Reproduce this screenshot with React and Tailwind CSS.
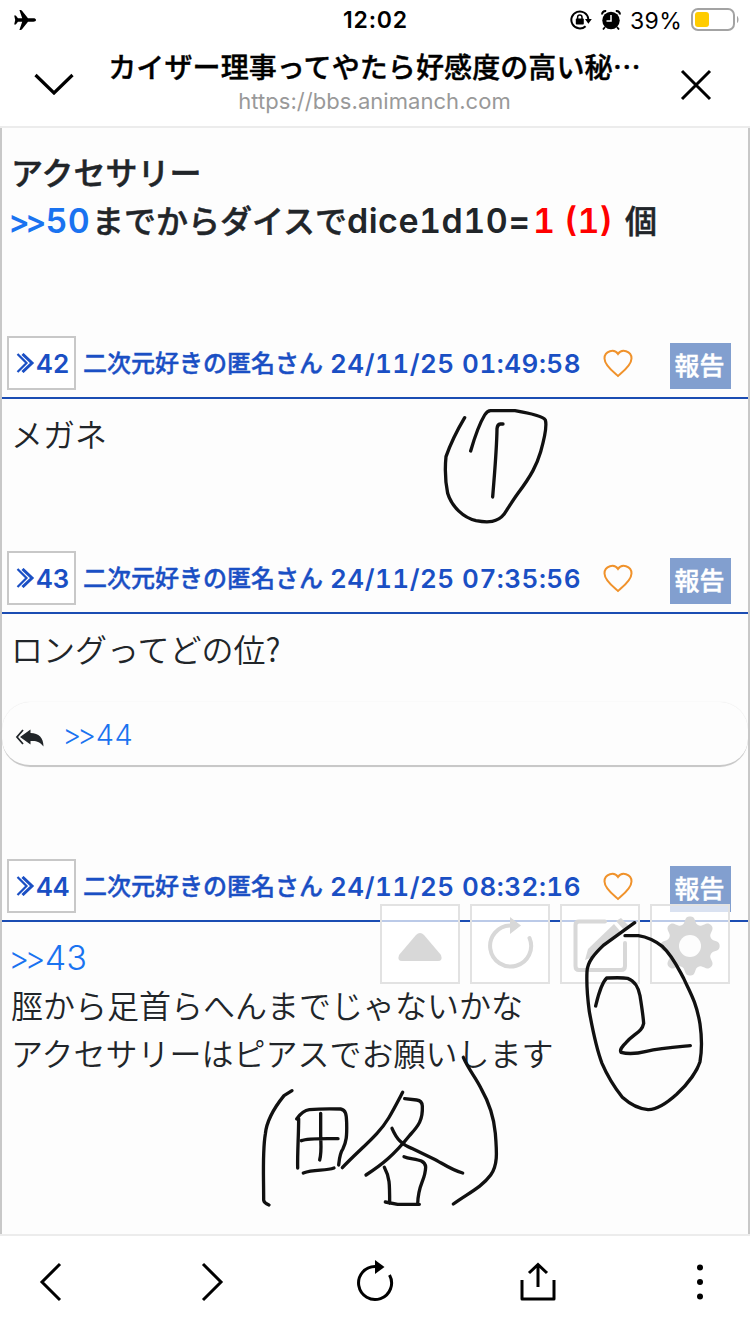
const jpFont = "font-['Noto_Sans_CJK_JP',sans-serif]";
const latinFont = "font-['Inter','Noto_Sans_CJK_JP',sans-serif]";

const StatusBar = () => (
  <div className="flex h-10 items-center justify-between pl-[14px] pr-[10px]">
    <div className="w-[167px]">
      <svg width="22" height="20" viewBox="0 0 22 20">
        <path d="M22 10c0-1.100-1.200-1.700-2.600-1.700h-5.400L8 .8C7.600.2 7.200 0 6.700 0H5.400l2.800 8.300H4L1.800 5.500H.2l1 4.500-1 4.500h1.600L4 11.700h4.200L5.400 20h1.300c.5 0 .9-.2 1.300-.8l6-7.500h5.400c1.400 0 2.600-.6 2.600-1.700z" />
      </svg>
    </div>
    <span className={`${latinFont} mt-px text-[23px] font-semibold tracking-[0.8px]`}>
      12:02
    </span>
    <div className="flex w-[170px] items-center">
      <svg width="22" height="20" viewBox="0 0 22 20" fill="none">
        <path
          d="M15.600 16.200A8.500 8.500 0 1 1 18.300 9"
          stroke="#000"
          strokeWidth="2"
        />
        <path d="M15 9h6.800l-3.400 4.800z" fill="#000" />
        <rect x="5.800" y="8.600" width="8" height="6" rx=".8" fill="#000" />
        <path d="M7.600 9V7.200a2.200 2.200 0 0 1 4.400 0V9" stroke="#000" strokeWidth="1.500" />
      </svg>
      <svg className="ml-[9px]" width="20" height="20" viewBox="0 0 20 20" fill="none">
        <circle cx="10" cy="10.500" r="8.700" fill="#000" />
        <path d="M1 4.500C1.200 2.300 3 .9 5.200 1M19 4.500C18.800 2.300 17 .9 14.800 1" stroke="#000" strokeWidth="2" />
        <path d="M4 17l-2 2.500M16 17l2 2.500" stroke="#000" strokeWidth="1.800" />
        <path d="M10 5v6H5.500" stroke="#fff" strokeWidth="1.500" />
      </svg>
      <span className={`${latinFont} ml-[9px] mt-[2px] w-[61px] whitespace-nowrap text-[23px] tracking-[0.4px]`}>
        39%
      </span>
      <svg className="shrink-0" width="48" height="24" viewBox="0 0 48 24" fill="none">
        <rect x="1" y="1" width="42" height="21" rx="6" stroke="#a3a3a3" strokeWidth="2" />
        <rect x="4" y="4" width="14" height="15" rx="3" fill="#ffcc00" />
        <path d="M46 8c2 1 2 6 0 7z" fill="#a3a3a3" />
      </svg>
    </div>
  </div>
);

const TitleBar = () => (
  <div className="flex h-[86px] items-center justify-between pl-[34px] pr-[38px]">
    <svg width="40" height="24" viewBox="0 0 40 24" fill="none" stroke="#000" strokeWidth="3.200">
      <path d="M1.500 4L20 22L38.500 4" />
    </svg>
    <div className="mr-[5px] mt-[-6px] flex w-[560px] flex-col items-center">
      <div className={`${jpFont} flex h-10 items-center whitespace-nowrap text-[28px] font-medium leading-10 tracking-[0.1px] [-webkit-text-stroke:0.4px_#000]`}>
        カイザー理事ってやたら好感度の高い秘…
      </div>
      <div className={`${latinFont} mt-px text-[22px] leading-7 tracking-[0.05px] text-[#999]`}>
        https://bbs.animanch.com
      </div>
    </div>
    <svg className="mt-[3px]" width="32" height="32" viewBox="0 0 32 32" fill="none" stroke="#000" strokeWidth="3">
      <path d="M2 2L30 30M30 2L2 30" />
    </svg>
  </div>
);

const PostHeader = ({ number, time }) => (
  <div className="flex h-[63px] items-start border-b-2 border-[#1b4db3] pl-[5px] pr-[17px] text-[#1a4fc4]">
    <div className="flex h-[54px] w-[69px] shrink-0 items-center border-2 border-[#c8c8c8] bg-white pl-[7px]">
      <svg width="20" height="20" viewBox="0 0 20 20" fill="none" stroke="#1a4fc4">
        <path d="M1.500 1L10.500 10L1.500 19" strokeWidth="2.200" />
        <path d="M6.500 1L16 10L6.500 19" strokeWidth="3" />
      </svg>
      <span className={`${latinFont} text-[26px] font-semibold tabular-nums`}>
        {number}
      </span>
    </div>
    <div className="ml-[7px] flex h-[54px] w-[520px] items-center whitespace-nowrap">
      <span className={`${jpFont} mt-[-3px] text-[24px] font-medium [-webkit-text-stroke:0.4px_#1a4fc4]`}>
        二次元好きの匿名さん
      </span>
      <span className={`${latinFont} ml-[7px] text-[26px] font-semibold tabular-nums tracking-[0.5px]`}>
        {time}
      </span>
    </div>
    <svg className="mt-[13px] shrink-0" width="30" height="30" viewBox="0 0 30 30" fill="none">
      <path
        d="M15 27C11 23.500 1.500 16.500 1.500 9.500C1.500 1.500 11.500-.5 15 5C18.500-.5 28.500 1.500 28.500 9.500C28.500 16.500 19 23.500 15 27Z"
        stroke="#f0922b"
        strokeWidth="2"
      />
    </svg>
    <button
      className={`${jpFont} ml-auto mt-[7px] h-[46px] w-[61px] shrink-0 bg-[#829fcf] text-[25px] font-medium leading-[46px] text-white [-webkit-text-stroke:0.4px_#fff]`}
    >
      <span className="block -translate-x-px -translate-y-[2px]">報告</span>
    </button>
  </div>
);

const Post = ({ number, time, children }) => (
  <article className="mb-[94px]">
    <PostHeader number={number} time={time} />
    <div className={`${jpFont} pl-[9px] pt-[10px] text-[32px] font-[350] leading-[48px]`}>
      {children}
    </div>
  </article>
);

const ToolButton = ({ children }) => (
  <button className="flex h-20 w-20 items-center justify-center border-2 border-[#e2e2e2] bg-white/70">
    {children}
  </button>
);

// Wavy outline with eight rounded teeth, centred in the 76px button
const gearPoints = Array.from({ length: 192 }, (_, i) => {
  const angle = (i / 192) * Math.PI * 2;
  const radius = 26 + 4.2 * Math.tanh(1.3 * Math.cos(angle * 8));
  const x = 38 + radius * Math.cos(angle);
  const y = 40 + radius * Math.sin(angle);
  return `${x.toFixed(2)},${y.toFixed(2)}`;
}).join(" ");

const PageTools = () => (
  <div className="absolute left-[380px] top-[904px] flex gap-[10px]">
    <ToolButton>
      <svg width="76" height="76" viewBox="0 0 76 76" fill="#d8d8d8">
        <path d="M34 29Q38 25 42 29L59 49Q61 55 56 55H20Q15 55 17 49Z" />
      </svg>
    </ToolButton>
    <ToolButton>
      <svg width="76" height="76" viewBox="0 0 76 76" fill="none">
        <path d="M38 19.500A20.500 20.500 0 1 0 57.500 32" stroke="#d8d8d8" strokeWidth="4" strokeLinecap="round" />
        <path d="M38 11L49 19.500L38 28Z" fill="#d8d8d8" />
      </svg>
    </ToolButton>
    <ToolButton>
      <svg width="76" height="76" viewBox="0 0 76 76" fill="none">
        <path
          d="M43 15.500H17Q13.500 15.500 13.500 19V60Q13.500 64 17 64H59Q63 64 63 60V37"
          stroke="#d8d8d8"
          strokeWidth="4"
          strokeLinecap="round"
        />
        <path d="M23 54L26 43L52 18L58 25L33 50Z" fill="#d8d8d8" />
        <path d="M54 15L59 12L68 21L62 24Z" fill="#d8d8d8" />
      </svg>
    </ToolButton>
    <ToolButton>
      <svg width="76" height="76" viewBox="0 0 76 76">
        <polygon points={gearPoints} fill="#d8d8d8" />
        <circle cx="38" cy="40" r="11" fill="#fdfdfd" />
      </svg>
    </ToolButton>
  </div>
);

// Pen strokes drawn over the page, each group in its own 3x local space
const Doodles = () => (
  <svg
    className="pointer-events-none absolute left-0 top-0"
    width="750"
    height="1334"
    viewBox="0 0 750 1334"
    fill="none"
    stroke="#111"
    strokeWidth="10"
    strokeLinecap="round"
    strokeLinejoin="round"
  >
    <g transform="translate(420 395) scale(.33333)">
      <path d="M134 68C112 105 92 145 78 185C74 225 76 260 83 295C95 335 130 368 168 377C205 384 233 382 252 358C266 337 278 317 294 295C335 240 350 210 362 170C372 135 382 95 376 75C368 62 320 53 285 47H212Q202 47 194 60C174 93 163 130 152 168" />
      <path d="M249 87H241Q232 88 231 101C230 170 223 240 218 306" />
    </g>
    <g transform="translate(370 850) scale(.33333)">
      <path d="M794 218L700 286C675 310 652 335 651 365C649 405 652 440 658 485C669 545 677 590 696 640C711 675 732 710 757 742C785 767 808 777 834 779C861 780 890 760 920 733C955 700 982 661 990 635C998 590 994 550 990 522C979 455 959 425 941 385C922 350 908 318 878 290C850 268 825 260 805 257H765" />
      <path d="M677 468C683 443 692 402 710 384C735 383 757 382 773 385C793 392 806 414 810 437C815 470 819 493 821 520C816 547 791 551 768 578C757 588 749 601 753 607C775 613 805 610 829 604C870 595 920 591 961 587" />
    </g>
    <g transform="translate(240 1040) scale(.33333)">
      <path d="M156 152L132 167C107 198 80 240 76 282C67 335 71 400 71 480Q72 489 87 495" />
      <path d="M170 237Q188 211 208 209C240 206 272 206 302 207C320 210 319 230 320 249C321 291 319 303 309 326C299 341 298 357 296 375" />
      <path d="M176 236C176 286 172 335 173 384M190 399C222 386 255 394 282 384" />
      <path d="M242 220V282C242 310 246 335 239 360M184 302C205 294 254 296 294 296" />
      <path d="M488 157C456 218 440 250 411 280C382 312 345 343 307 383" />
      <path d="M494 176L530 180Q546 182 547 198C549 240 535 258 510 285C460 347 427 373 378 405" />
      <path d="M456 265C470 297 485 314 515 325L580 356C605 368 631 389 668 399" />
      <path d="M433 382C449 412 449 430 449 490M492 350C515 360 555 354 557 381C556 424 534 430 533 493M436 486L473 493H538" />
      <path d="M670 52C686 89 707 112 723 145C744 182 761 222 766 280C771 340 773 376 752 405C725 442 684 460 640 492" />
    </g>
  </svg>
);

const BottomNav = () => (
  <nav className="flex h-[100px] items-start justify-between border-t-2 border-[#ececec] bg-white pl-[26px] pr-[25px] pt-[20px]">
    <svg width="50" height="50" viewBox="0 0 50 50" fill="none" stroke="#000" strokeWidth="3">
      <path d="M34 8L16 26L34 44" />
    </svg>
    <svg width="50" height="50" viewBox="0 0 50 50" fill="none" stroke="#000" strokeWidth="3">
      <path d="M15 8L33 26L15 44" />
    </svg>
    <svg width="50" height="50" viewBox="0 0 50 50" fill="none">
      <path d="M24 10.500A16.500 16.500 0 1 0 38.500 19" stroke="#000" strokeWidth="3" />
      <path d="M24 4L33.500 11L24 18Z" fill="#000" />
    </svg>
    <svg width="50" height="50" viewBox="0 0 50 50" fill="none" stroke="#000" strokeWidth="3">
      <path d="M9 24V43H41V24" strokeLinejoin="round" />
      <path d="M25 31V8M16 17L25 8.500L34 17" />
    </svg>
    <svg width="50" height="50" viewBox="0 0 50 50">
      <circle cx="25" cy="11.500" r="3" />
      <circle cx="25" cy="26" r="3" />
      <circle cx="25" cy="40.500" r="3" />
    </svg>
  </nav>
);

const App = () => {
  return (
    <div className="relative h-[1334px] w-[750px] overflow-hidden bg-white text-black">
      <header className="h-32 border-b-2 border-[#ececec]">
        <StatusBar />
        <TitleBar />
      </header>

      <main className="h-[1106px] overflow-hidden border-x-2 border-[#c8c8c8] bg-[#fdfdfd] pt-[19px] text-[#212529]">
        <div className={`${jpFont} mb-[90px] whitespace-nowrap pl-[9px] text-[32px] font-medium leading-[48px]`}>
          <div className="[-webkit-text-stroke:0.5px_#212529]">アクセサリー</div>
          <div className="flex">
            <span className={`${latinFont} w-[81px] pt-[2px] font-semibold tabular-nums text-[#1a73f0]`}>
              <span className="ml-[-2px] tracking-[-4px]">&gt;&gt;</span>
              <span className="ml-[3px] text-[34px] tracking-[0.3px]">50</span>
            </span>
            <span className="w-[255px] [-webkit-text-stroke:0.5px_#212529]">
              までからダイスで
            </span>
            <span className={`${latinFont} w-[186px] pt-[2px] text-[34px] font-semibold tabular-nums tracking-[0.5px]`}>
              dice1d10=
            </span>
            <span className={`${latinFont} w-[92px] pt-[2px] text-[34px] font-semibold tabular-nums text-[#f00]`}>
              1 (1)
            </span>
            <span className="[-webkit-text-stroke:0.5px_#212529]">個</span>
          </div>
        </div>

        <Post number="42" time="24/11/25 01:49:58">
          メガネ
        </Post>
        <Post number="43" time="24/11/25 07:35:56">
          ロングってどの位?
          <div className="-mb-[2px] ml-[-9px] mt-[30px] flex h-[65px] items-center rounded-[28px] border-b-2 border-[#c8c8c8] pl-[13px] shadow-[0_0_1px_#ddd]">
            <svg className="mt-[8px]" width="30" height="20" viewBox="0 0 30 20">
              <path d="M8 2L2 9L8 16" fill="none" stroke="#212529" strokeWidth="1.800" />
              <path d="M5 9L15.500 1.500V5C24 5 28.500 10 28.500 18.500C25 13.500 21 12.500 15.500 13V16.500Z" fill="#212529" />
            </svg>
            <span className={`${latinFont} ml-[18px] mt-[2px] text-[29px] font-light tabular-nums text-[#1a73f0]`}>
              <span className="tracking-[-4px]">&gt;&gt;</span>
              <span className="ml-[3px]">44</span>
            </span>
          </div>
        </Post>
        <Post number="44" time="24/11/25 08:32:16">
          <div className={`${latinFont} pt-[2px] font-light tabular-nums text-[#1a73f0]`}>
            <span className="ml-[-2px] tracking-[-4.500px]">&gt;&gt;</span>
            <span className="ml-[3px] text-[34px] tracking-[-0.5px]">43</span>
          </div>
          <div className="-mt-[3px]">脛から足首らへんまでじゃないかな</div>
          <div>アクセサリーはピアスでお願いします</div>
        </Post>
      </main>

      <BottomNav />
      <PageTools />
      <Doodles />
    </div>
  );
};

export default App;
